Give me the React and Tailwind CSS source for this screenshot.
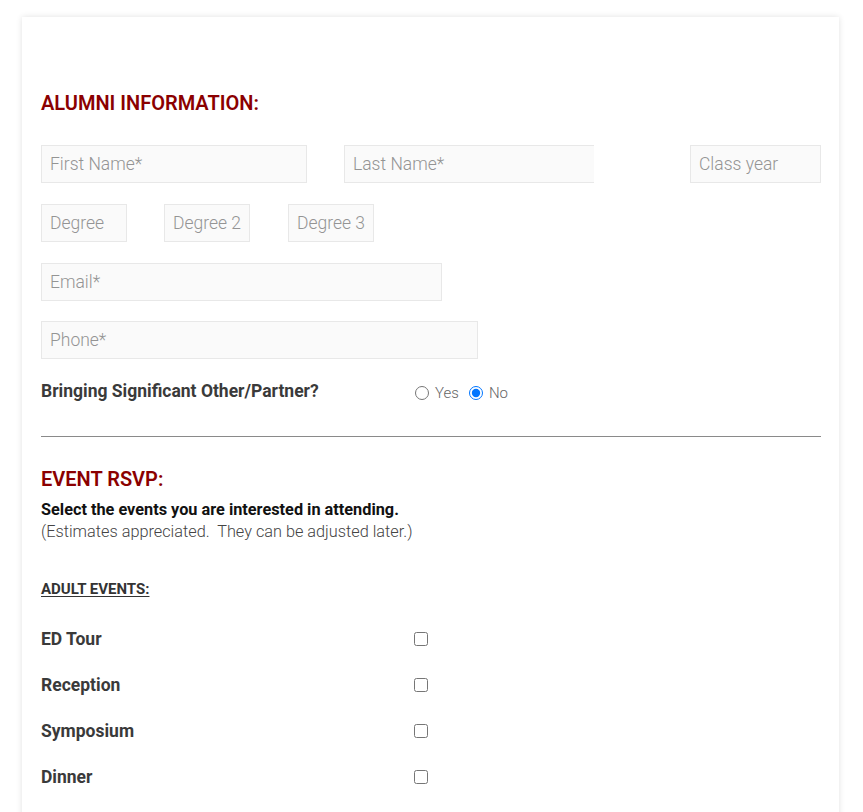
import React from 'react'

const field =
  'h-[38px] border border-[#e8e8e8] bg-[#fafafa] pl-2 pr-1 text-[17.5px] font-light text-[#333] placeholder:text-[#949494] outline-none'

function Input({ className, placeholder }) {
  return <input type="text" placeholder={placeholder} className={`${field} ${className}`} />
}

const events = ['ED Tour', 'Reception', 'Symposium', 'Dinner']

export default function App() {
  return (
    <div className="min-h-screen bg-white pt-[17px] pl-[22px] pr-[24px] font-['Roboto',sans-serif]">
      <div className="bg-white pl-[19px] pr-[18px] pb-10 pt-[74px] shadow-[0_0_6px_rgba(0,0,0,0.12)]">
        <h2 className="text-[20px] font-semibold leading-[24px] text-[#8b0000]">ALUMNI INFORMATION:</h2>

        {/* name row */}
        <div className="mt-[30px] flex">
          <Input placeholder="First Name*" className="w-[266px]" />
          <Input placeholder="Last Name*" className="ml-[37px] w-[250px] border-r-0" />
          <Input placeholder="Class year" className="ml-auto w-[131px]" />
        </div>

        {/* degrees */}
        <div className="mt-[21px] flex">
          <Input placeholder="Degree" className="h-[37px] w-[86px]" />
          <Input placeholder="Degree 2" className="ml-[37px] h-[37px] w-[86px]" />
          <Input placeholder="Degree 3" className="ml-[38px] h-[37px] w-[86px]" />
        </div>

        <Input placeholder="Email*" className="mt-[21px] block w-[401px] h-[37px]" />
        <Input placeholder="Phone*" className="mt-[20px] block w-[437px]" />

        <div className="mt-[20px] flex h-[24px] items-center">
          <span className="w-[373px] text-[17.5px] font-bold leading-[24px] text-[#3a3a3a]">
            Bringing Significant Other/Partner?
          </span>
          <label className="ml-[1px] mt-[4px] flex items-center gap-[6px] text-[15px] leading-[18px] font-light text-[#666]">
            <input type="radio" name="partner" className="m-0 h-[14px] w-[14px]" />
            Yes
          </label>
          <label className="ml-[10px] mt-[4px] flex items-center gap-[6px] text-[15px] leading-[18px] font-light text-[#666]">
            <input type="radio" name="partner" defaultChecked className="m-0 h-[14px] w-[14px]" />
            No
          </label>
        </div>

        <hr className="mt-[33px] border-t border-[#8a8a8a]" />

        <h2 className="mt-[31px] text-[20px] font-semibold leading-[22px] text-[#8b0000]">EVENT RSVP:</h2>
        <p className="mt-[9px] text-[16.3px] font-bold leading-[22px] text-[#111]">
          Select the events you are interested in attending.
        </p>
        <p className="text-[16.3px] font-light leading-[22px] text-[#444]">
          (Estimates appreciated.&nbsp; They can be adjusted later.)
        </p>

        <p className="mt-[36px] text-[15px] font-bold leading-[20px] text-[#333] underline underline-offset-2">
          ADULT EVENTS:
        </p>

        <div className="mt-[28px] flex flex-col gap-[22px]">
          {events.map((e) => (
            <div key={e} className="flex items-center">
              <span className="w-[373px] text-[17.5px] font-bold leading-[24px] text-[#3a3a3a]">{e}</span>
              <input type="checkbox" className="m-0 h-[14px] w-[14px]" />
            </div>
          ))}
        </div>
      </div>
    </div>
  )
}
